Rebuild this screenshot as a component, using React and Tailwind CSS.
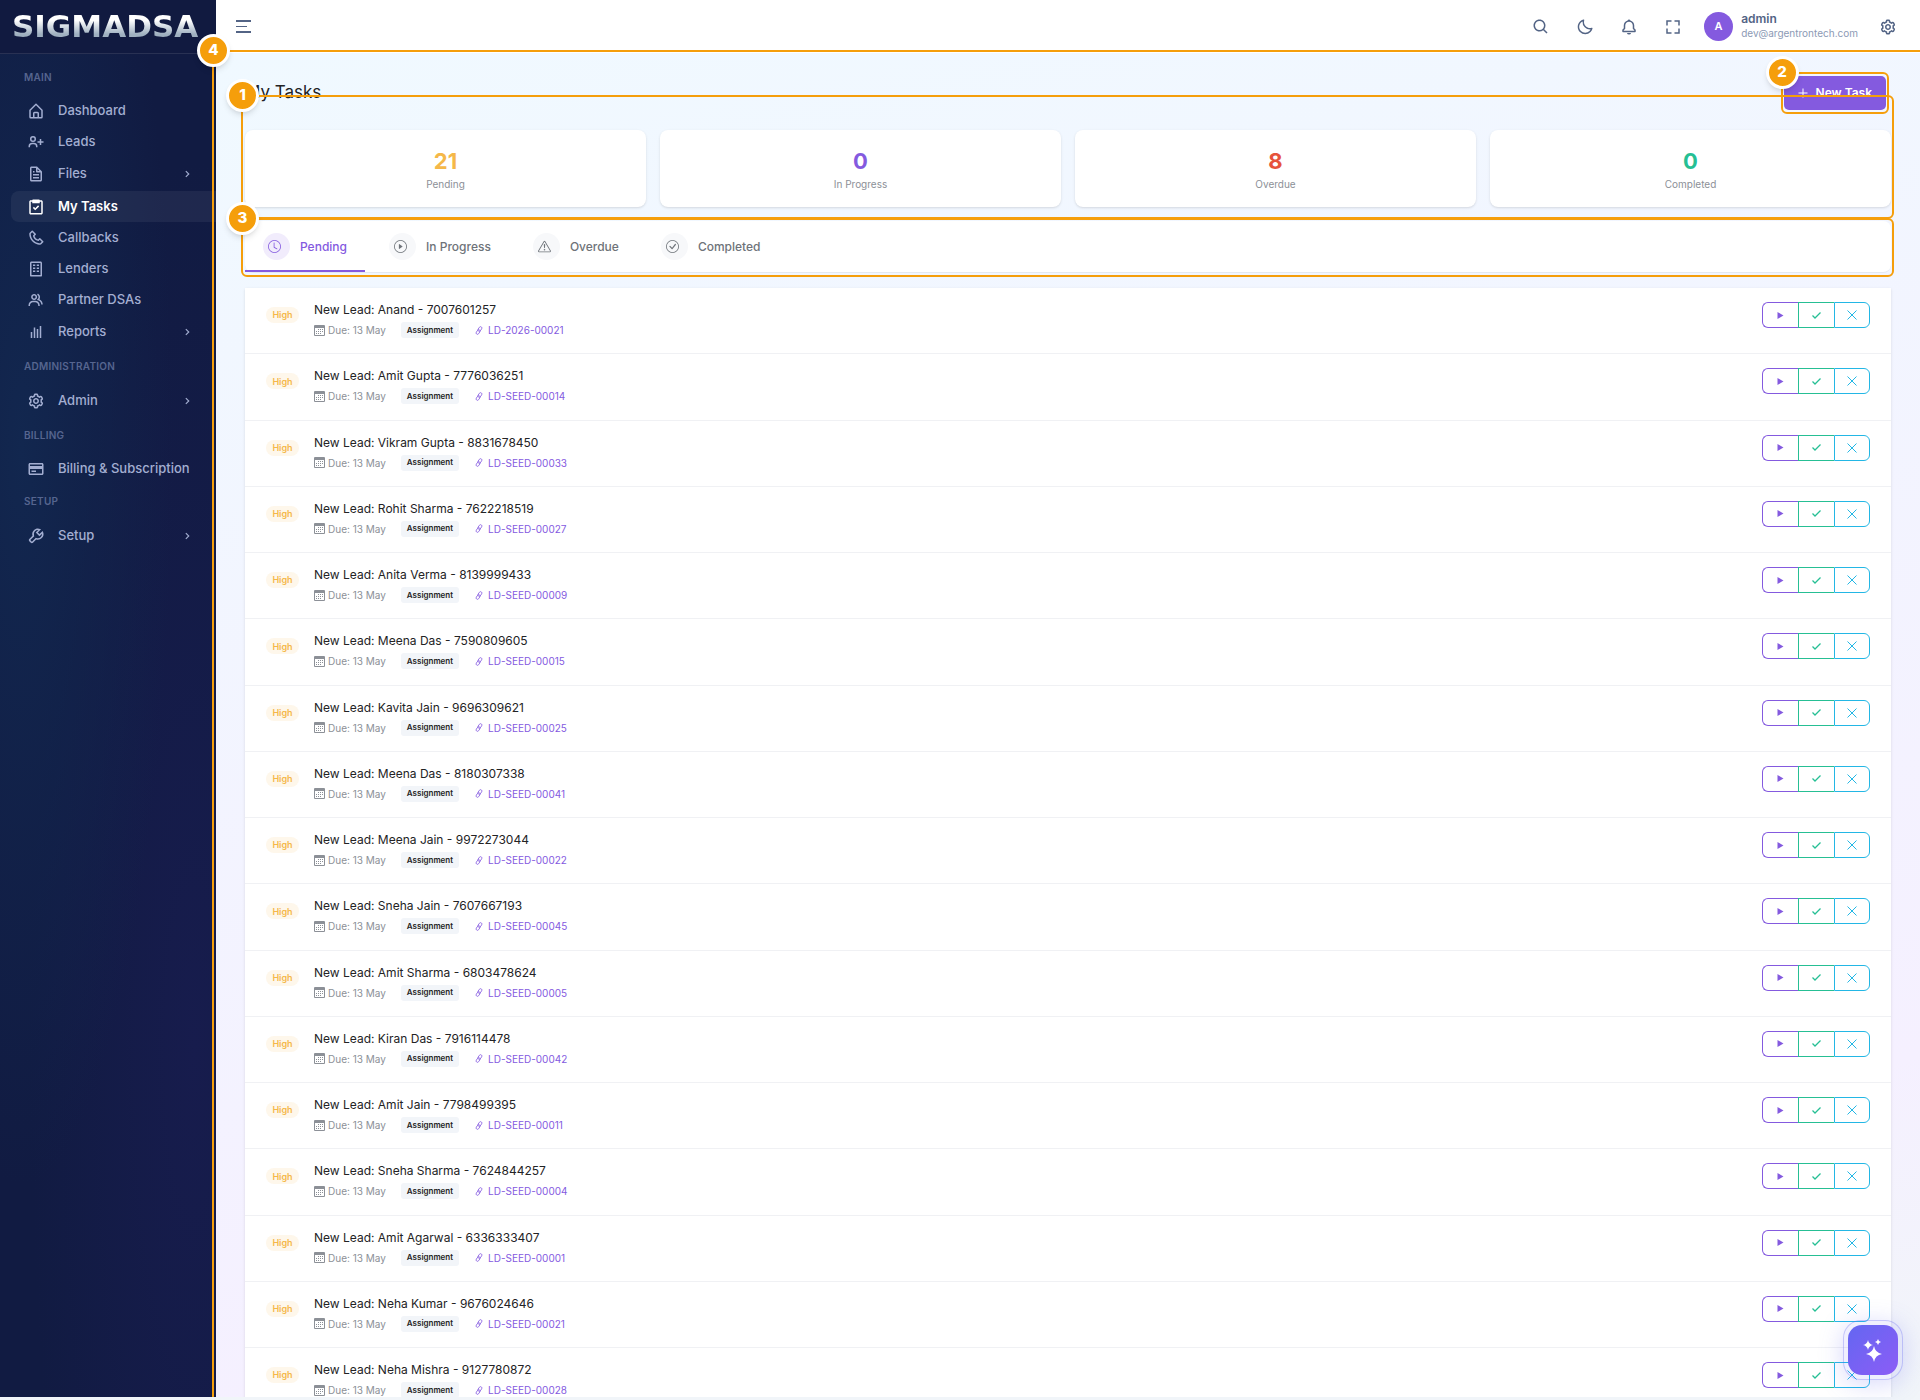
import {
    BiSearch, BiMoon, BiBell, BiFullscreen, BiCog, BiHomeAlt, BiUserPlus, BiFile, BiTask, BiPhone, BiBuilding, BiGroup,
    BiBarChart, BiCreditCard, BiWrench, BiChevronRight,
} from "react-icons/bi";
import { BsClock, BsPlayCircle, BsExclamationTriangle, BsCheckCircle } from "react-icons/bs";
import clsx from "clsx";

const menu = [
    {
        title: "Main",
        items: [
            { label: "Dashboard", icon: BiHomeAlt },
            { label: "Leads", icon: BiUserPlus },
            { label: "Files", icon: BiFile, children: true },
            { label: "My Tasks", icon: BiTask, active: true },
            { label: "Callbacks", icon: BiPhone },
            { label: "Lenders", icon: BiBuilding },
            { label: "Partner DSAs", icon: BiGroup },
            { label: "Reports", icon: BiBarChart, children: true },
        ],
    },
    { title: "Administration", items: [{ label: "Admin", icon: BiCog, children: true }] },
    { title: "Billing", items: [{ label: "Billing & Subscription", icon: BiCreditCard }] },
    { title: "Setup", items: [{ label: "Setup", icon: BiWrench, children: true }] },
];

const stats = [
    { label: "Pending", value: 21, color: "text-[#f5b849]" },
    { label: "In Progress", value: 0, color: "text-[#845adf]" },
    { label: "Overdue", value: 8, color: "text-[#e6533c]" },
    { label: "Completed", value: 0, color: "text-[#26bf94]" },
];

const tabs = [
    { label: "Pending", icon: BsClock, active: true },
    { label: "In Progress", icon: BsPlayCircle },
    { label: "Overdue", icon: BsExclamationTriangle },
    { label: "Completed", icon: BsCheckCircle },
];

const tasks = [
    { name: "Anand", phone: "7007601257", lead: "LD-2026-00021" },
    { name: "Amit Gupta", phone: "7776036251", lead: "LD-SEED-00014" },
    { name: "Vikram Gupta", phone: "8831678450", lead: "LD-SEED-00033" },
    { name: "Rohit Sharma", phone: "7622218519", lead: "LD-SEED-00027" },
    { name: "Anita Verma", phone: "8139999433", lead: "LD-SEED-00009" },
    { name: "Meena Das", phone: "7590809605", lead: "LD-SEED-00015" },
    { name: "Kavita Jain", phone: "9696309621", lead: "LD-SEED-00025" },
    { name: "Meena Das", phone: "8180307338", lead: "LD-SEED-00041" },
    { name: "Meena Jain", phone: "9972273044", lead: "LD-SEED-00022" },
    { name: "Sneha Jain", phone: "7607667193", lead: "LD-SEED-00045" },
    { name: "Amit Sharma", phone: "6803478624", lead: "LD-SEED-00005" },
    { name: "Kiran Das", phone: "7916114478", lead: "LD-SEED-00042" },
    { name: "Amit Jain", phone: "7798499395", lead: "LD-SEED-00011" },
    { name: "Sneha Sharma", phone: "7624844257", lead: "LD-SEED-00004" },
    { name: "Amit Agarwal", phone: "6336333407", lead: "LD-SEED-00001" },
    { name: "Neha Kumar", phone: "9676024646", lead: "LD-SEED-00021" },
    { name: "Neha Mishra", phone: "9127780872", lead: "LD-SEED-00028" },
];

// Outlined guide area with its step number on the top left corner
const Guide = ({ step, className }) => (
    <div className={clsx("pointer-events-none absolute z-20 rounded-md border-2 border-[#f59e0b]", className)}>
        <span className="absolute -left-[17px] -top-[18px] flex size-[33px] items-center justify-center rounded-full border-3 border-white bg-[#f59e0b] text-[15px] font-extrabold text-white shadow-md">
            {step}
        </span>
    </div>
);

const Sidebar = () => (
    <aside className="w-[216px] shrink-0 bg-[#111b42] bg-[radial-gradient(ellipse_at_10%_32%,#12274f_0%,transparent_55%),radial-gradient(ellipse_at_90%_75%,#171c4d_0%,transparent_60%)]">
        <div className="flex h-[54px] items-center border-b border-white/10 bg-[#111a40] pl-3">
            <span className="bg-linear-to-b from-white from-30% to-[#9fb0c0] to-75% bg-clip-text font-['DejaVu_Sans'] text-[31px] leading-none font-bold text-transparent">
                SIGMADSA
            </span>
        </div>
        <nav className="pt-[13px]">
            {menu.map((group) => (
                <div key={group.title} className="pb-[7px]">
                    <p className="mb-[7px] flex h-[21px] items-center pl-6 text-[10px] font-semibold tracking-wide text-[#56658f] uppercase">{group.title}</p>
                    {group.items.map((item) => (
                        <a
                            key={item.label}
                            href="#"
                            className={clsx(
                                "ml-[11px] flex items-center rounded-l-lg pl-4 pr-[22px] text-[13px]",
                                item.children ? "h-[34px]" : "h-[31px]",
                                item.active ? "bg-white/6 font-semibold text-white" : "font-medium text-[#a3aed1]"
                            )}
                        >
                            <item.icon size={18} className="mr-[13px]" />
                            <span className="flex-1 whitespace-nowrap">{item.label}</span>
                            {item.children && <BiChevronRight size={14} />}
                        </a>
                    ))}
                </div>
            ))}
        </nav>
    </aside>
);

const Header = () => (
    <header className="flex h-[53px] items-center bg-white pl-5 pr-[23px] text-[#536485]">
        <button aria-label="Toggle menu" className="flex flex-col gap-1">
            <span className="h-[2px] w-[15px] bg-current" />
            <span className="h-px w-[11px] bg-current" />
            <span className="h-[2px] w-[15px] bg-current" />
        </button>
        <div className="ml-auto flex items-center">
            <div className="flex items-center gap-[26px]">
                <button aria-label="Search"><BiSearch size={18} /></button>
                <button aria-label="Dark mode"><BiMoon size={18} /></button>
                <button aria-label="Notifications"><BiBell size={18} /></button>
                <button aria-label="Full screen"><BiFullscreen size={18} /></button>
            </div>
            <button className="ml-[22px] flex items-center gap-2 text-left">
                <span className="flex size-[29px] items-center justify-center rounded-full bg-[#845adf] text-[11px] font-semibold text-white">A</span>
                <span className="pb-0.5">
                    <span className="block text-[12px] leading-[15px] font-semibold">admin</span>
                    <span className="block text-[10px] leading-[14px] text-[#8c9ab5]">dev@argentrontech.com</span>
                </span>
            </button>
            <button aria-label="Settings" className="ml-[21px]"><BiCog size={18} /></button>
        </div>
    </header>
);

const CalendarIcon = () => (
    <svg width="11" height="11" viewBox="0 0 11 11" fill="currentColor" className="mr-[3px]">
        <path fillRule="evenodd" d="M1 0h9a1 1 0 0 1 1 1v9a1 1 0 0 1-1 1H1a1 1 0 0 1-1-1V1a1 1 0 0 1 1-1zM1 3v7h9V3z" />
        <path d="M4 4h1v1H4zM6 4h1v1H6zM8 4h1v1H8zM2 6h1v1H2zM4 6h1v1H4zM6 6h1v1H6zM8 6h1v1H8zM2 8h1v1H2zM4 8h1v1H4zM6 8h1v1H6z" />
    </svg>
);

const LinkIcon = () => (
    <svg width="8" height="9" viewBox="0 0 16 18" fill="none" stroke="currentColor" strokeWidth="1.500">
        <rect x="7" y="1" width="5.500" height="10" rx="2.750" transform="rotate(35 9.750 6)" />
        <rect x="3.500" y="7" width="5.500" height="10" rx="2.750" transform="rotate(35 6.250 12)" />
    </svg>
);

const TaskRow = ({ task }) => (
    <li className="flex items-start border-b border-[#f0f1f4] px-[21px] pt-[14px] pb-[15px]">
        <span className="mt-[5px] mr-[15px] flex h-4 w-[33px] shrink-0 items-center justify-center rounded-full bg-[#fef7eb] text-[9px] font-semibold text-[#f5b849]">High</span>
        <div className="min-w-0 flex-1">
            <p className="mb-1 text-[12px] leading-4 text-[#232325]">New Lead: {task.name} - {task.phone}</p>
            <div className="flex items-center text-[10px] leading-relaxed text-[#8c9097]">
                <CalendarIcon />
                <span>Due: 13 May</span>
                <span className="ml-[15px] flex h-4 items-center rounded-[3px] bg-[#f2f5f9] px-1.5 text-[8px] font-semibold text-[#232323]">Assignment</span>
                <a href="#" className="ml-4 flex items-center gap-[5px] text-[#845adf]"><LinkIcon />{task.lead}</a>
            </div>
        </div>
        <div className="flex h-[26px]">
            <button aria-label="Start" className="flex w-9 items-center justify-center rounded-l-md border border-r-0 border-[#845adf] text-[#845adf]">
                <svg width="7" height="7" viewBox="0 0 7 7" fill="currentColor"><path d="M0.500 0 6.500 3.500 0.500 7z" /></svg>
            </button>
            <button aria-label="Complete" className="flex w-9 items-center justify-center border border-r-0 border-[#26bf94] text-[#26bf94]">
                <svg width="9" height="7" viewBox="0 0 9 7" fill="none" stroke="currentColor" strokeWidth="1.300"><path d="m0.500 3.500 2.500 2.500 5.500-5.500" /></svg>
            </button>
            <button aria-label="Dismiss" className="flex w-9 items-center justify-center rounded-r-md border border-[#23b7e5] text-[#23b7e5]">
                <svg width="10" height="10" viewBox="0 0 10 10" fill="none" stroke="currentColor"><path d="m0.500 0.500 9 9m0-9-9 9" /></svg>
            </button>
        </div>
    </li>
);

const App = () => {
    return (
        <div className="h-screen bg-[#f1f5f9] pb-[3px] font-['Inter',sans-serif]">
            <div className="flex h-full overflow-hidden">
                <Sidebar />
                <div className="relative flex min-w-0 flex-1 flex-col">
                    <Header />
                    <Guide step={4} className="-bottom-2 -left-1 -right-2 top-[50px]" />
                    <main className="min-h-0 flex-1 bg-linear-[168deg] from-[#f0f9ff] via-[#f5f0ff] via-80% to-[#f1f5f9] px-[29px] pt-[23px]">
                        <div className="mb-5 flex items-center justify-between pr-[5px]">
                            <h1 className="text-[17px] text-[#232325]">My Tasks</h1>
                            <div className="relative">
                                <button className="flex h-[34px] items-center gap-2 rounded-[5px] bg-[#845adf] px-[14px] text-[12px] font-semibold text-white">
                                    <svg width="10" height="10" viewBox="0 0 10 10" fill="none" stroke="currentColor"><path d="M5 0.500v9M0.500 5h9" /></svg>
                                    New Task
                                </button>
                                <Guide step={2} className="-inset-x-[3px] -inset-y-1" />
                            </div>
                        </div>
                        <section className="relative mb-[14px] grid grid-cols-4 gap-[14px]">
                            {stats.map((stat) => (
                                <div key={stat.label} className="flex h-[77px] flex-col items-center justify-center rounded-lg bg-white pt-0.5 shadow-sm">
                                    <p className={clsx("text-[22px] leading-[26px] font-bold", stat.color)}>{stat.value}</p>
                                    <p className="mt-0.5 text-[10px] leading-4 text-[#8c9097]">{stat.label}</p>
                                </div>
                            ))}
                            <Guide step={1} className="-bottom-3 -left-1 -right-[3px] -top-[35px]" />
                        </section>
                        <section className="relative mb-[15px]">
                            <div className="flex h-[52px] gap-1.5 rounded-lg border-b border-[#e5e9ef] bg-white">
                                {tabs.map((tab) => (
                                    <button
                                        key={tab.label}
                                        className={clsx(
                                            "flex items-center border-y-2 border-t-transparent px-[18px] text-[12px] font-medium",
                                            tab.active ? "border-b-[#845adf] text-[#845adf]" : "border-b-transparent text-[#6e7379]"
                                        )}
                                    >
                                        <span className={clsx("mr-[10px] flex size-[27px] items-center justify-center rounded-full pr-1", tab.active ? "bg-[#f1ecfc]" : "bg-[#f7f8fa]")}>
                                            <tab.icon size={13} />
                                        </span>
                                        {tab.label}
                                    </button>
                                ))}
                            </div>
                            <Guide step={3} className="-bottom-1 -left-1 -right-[3px] -top-[3px]" />
                        </section>
                        <ul className="bg-white shadow-sm">
                            {tasks.map((task) => <TaskRow key={task.lead + task.phone} task={task} />)}
                        </ul>
                    </main>
                </div>
            </div>
            <button aria-label="AI assistant" className="fixed right-[17px] bottom-5 z-30 flex size-[60px] items-center justify-center rounded-[18px] border border-[#6366f1]/30 bg-[#6366f1]/10 shadow-[0_4px_24px_rgba(99,102,241,0.25)]">
                <span className="flex size-[50px] shrink-0 items-center justify-center rounded-[14px] bg-linear-to-br from-[#6366f1] to-[#8b5cf6]">
                    <svg width="22" height="24" viewBox="0 0 22 24" fill="#fff">
                        <path d="M12 8q1.200 6.800 8 8-6.800 1.200-8 8-1.200-6.800-8-8 6.800-1.200 8-8z" />
                        <path d="M6 2q.8 4.200 5 5-4.200.8-5 5-.8-4.200-5-5 4.200-.8 5-5z" />
                        <path d="M16 1q.5 2.500 3 3-2.500.5-3 3-.5-2.500-3-3 2.500-.5 3-3z" />
                    </svg>
                </span>
            </button>
        </div>
    );
};
export default App;
